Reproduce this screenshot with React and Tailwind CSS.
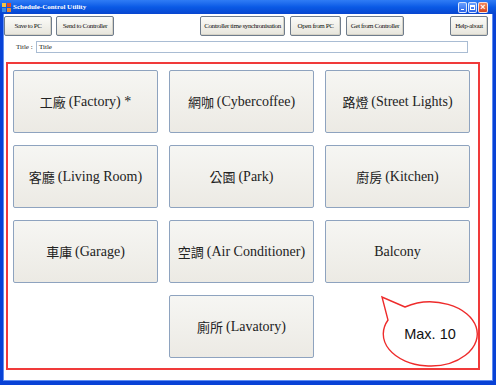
const toolbar = [
  { label: "Save to PC", ml: "ml-0", w: "w-[48px]" },
  { label: "Send to Controller", ml: "ml-[4px]", w: "w-[58px]" },
  { label: "Controller time synchronisation", ml: "ml-[86px]", w: "w-[85px]" },
  { label: "Open from PC", ml: "ml-[5px]", w: "w-[51px]" },
  { label: "Get from Controller", ml: "ml-[5px]", w: "w-[58px]" },
  { label: "Help-about", ml: "ml-[46px]", w: "w-[38px]" },
];

const rooms = [
  ["工廠", "(Factory) *"],
  ["網咖", "(Cybercoffee)"],
  ["路燈", "(Street Lights)"],
  ["客廳", "(Living Room)"],
  ["公園", "(Park)"],
  ["廚房", "(Kitchen)"],
  ["車庫", "(Garage)"],
  ["空調", "(Air Conditioner)"],
  ["", "Balcony"],
  null,
  ["廁所", "(Lavatory)"],
];

function AppIcon() {
  return (
    <svg width="9" height="9" viewBox="0 0 9 9">
      <rect x="0" y="0" width="4" height="4" fill="#f6c343" />
      <rect x="5" y="0" width="4" height="4" fill="#e04b2a" />
      <rect x="0" y="5" width="4" height="4" fill="#3b8be6" />
      <rect x="5" y="5" width="4" height="4" fill="#f08a2a" />
    </svg>
  );
}

function WindowButtons() {
  return (
    <div className="ml-auto mr-[8px] flex gap-[1px]">
      <div className="flex h-[11px] w-[9px] items-end justify-center rounded-[2px] border border-white/80 bg-gradient-to-b from-[#6aa0ff] to-[#2a62e6] pb-[2px]">
        <div className="h-[1px] w-[3px] bg-white" />
      </div>
      <div className="flex h-[11px] w-[9px] items-center justify-center rounded-[2px] border border-white/80 bg-gradient-to-b from-[#6aa0ff] to-[#2a62e6]">
        <div className="h-[5px] w-[5px] border border-t-2 border-white" />
      </div>
      <div className="flex h-[11px] w-[10px] items-center justify-center rounded-[2px] border border-white/80 bg-gradient-to-b from-[#f0865d] to-[#d6431c] font-['Liberation_Sans'] text-[9px] font-bold leading-none text-white">
        ×
      </div>
    </div>
  );
}

function Bubble() {
  return (
    <svg
      className="pointer-events-none absolute left-[378px] top-[293px]"
      width="104"
      height="76"
      viewBox="378 293 104 76"
    >
      <path
        d="M 405 307 L 382 297 L 388 320 A 47 32 0 1 0 405 307 Z"
        fill="#fff"
        stroke="#ee2b2b"
        strokeWidth="1.4"
      />
      <text
        x="430"
        y="339"
        textAnchor="middle"
        fontSize="14.5"
        fill="#111"
        fontFamily="Liberation Sans, sans-serif"
      >
        Max. 10
      </text>
    </svg>
  );
}

export default function App() {
  return (
    <div className="relative flex h-[385px] w-[496px] flex-col overflow-hidden bg-[#0842d6] font-['Liberation_Serif']">
      <div className="flex h-[14px] items-center bg-gradient-to-b from-[#2f7cf5] via-[#0a5ae6] to-[#0845cf] pl-[2px]">
        <AppIcon />
        <span className="ml-[2px] text-[7px] font-bold leading-none text-white">
          Schedule-Control Utility
        </span>
        <WindowButtons />
      </div>

      <div className="mx-[3px] mb-[4px] flex flex-1 flex-col border-x border-b border-[#5f8cf0] bg-white">
        <div className="mt-[2px] flex">
          {toolbar.map((b) => (
            <div
              key={b.label}
              className={`${b.ml} ${b.w} flex h-[20px] items-center justify-center whitespace-nowrap rounded-[2px] border border-[#6f7c8c] bg-gradient-to-b from-[#fbfbf8] to-[#e7e5dc] text-[7px] leading-none tracking-[-0.4px] text-[#111] shadow-[inset_-1px_-1px_0_#d5d2c6]`}
            >
              {b.label}
            </div>
          ))}
        </div>

        <div className="mt-[5px] flex items-center">
          <span className="ml-[12px] w-[18px] text-[7px] leading-none text-[#222]">Title :</span>
          <div className="ml-[2px] flex h-[12px] w-[432px] items-center border border-[#a9bcd3] pl-[2px] text-[7px] leading-none text-[#111]">
            Title
          </div>
        </div>

        <div className="ml-[2px] mt-[9px] h-[308px] w-[474px] border-2 border-[#f03a3a] pl-[5px] pt-[6px]">
          <div className="grid grid-cols-[145px_145px_145px] gap-x-[11px] gap-y-[12px]">
            {rooms.map((r, i) =>
              r ? (
                <div
                  key={i}
                  className="flex h-[63px] items-center justify-center whitespace-pre rounded-[2px] border border-[#8ea3bf] bg-gradient-to-b from-[#f6f6f3] to-[#eceae4] text-[14px] text-[#222]"
                >
                  {r[0] && <span className="font-['Noto_Sans_CJK_TC'] text-[13px]">{r[0] + " "}</span>}
                  <span className="font-['Liberation_Serif']">{r[1]}</span>
                </div>
              ) : (
                <div key={i} />
              )
            )}
          </div>
        </div>
      </div>

      <Bubble />
    </div>
  );
}
